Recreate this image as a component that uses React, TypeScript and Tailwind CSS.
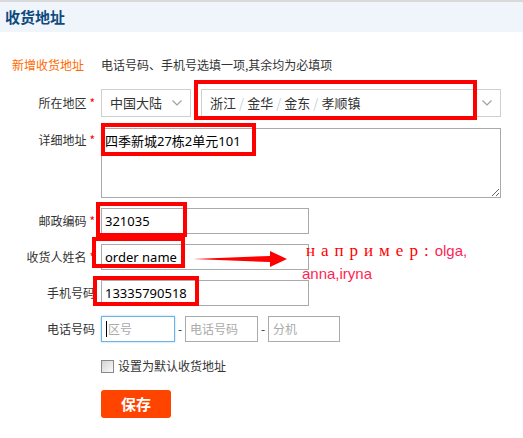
import React from "react";

const cjk = { fontFamily: '"Noto Sans CJK SC", "Noto Sans", sans-serif' };
const val = { fontFamily: '"Noto Sans", "Noto Sans CJK SC", sans-serif' };

const Chevron = () => (
  <svg width="10" height="6" viewBox="0 0 10 6" className="shrink-0">
    <polyline points="0.5,0.5 5,5 9.5,0.5" fill="none" stroke="#a0a0a0" strokeWidth="1.2" />
  </svg>
);

const Label = ({ text, required }: { text: string; required?: boolean }) => (
  <div className="w-[95px] flex justify-end items-center text-[12px] text-[#333] shrink-0">
    <span>{text}</span>
    {required && <span className="ml-[3px] text-[#f00] text-[12px] leading-none">*</span>}
  </div>
);

const RedBox = ({ className }: { className: string }) => (
  <div className={`absolute border-[4px] border-[#ff0000] pointer-events-none ${className}`} />
);

const Slash = () => <span className="mx-[3px] text-[#c9cfe0]">/</span>;

export default function App() {
  return (
    <div className="relative w-[523px] h-[438px] bg-white overflow-hidden" style={cjk}>
      {/* header */}
      <div className="border-t-2 border-[#d9d9d9] bg-[#f0f5fc] h-[32px] px-[5px] flex items-center">
        <h2 className="text-[15px] font-bold text-[#0d4a7e]">收货地址</h2>
      </div>

      <div className="pb-4">
        <div className="flex items-center h-[16px] mt-[25px] text-[12px]">
          <div className="w-[101px] pl-[12px] text-[#ff6a00] shrink-0">新增收货地址</div>
          <div className="text-[#333]">电话号码、手机号选填一项,其余均为必填项</div>
        </div>

        {/* region */}
        <div className="flex items-center h-[28px] mt-[16px]">
          <Label text="所在地区" required />
          <div className="ml-[6px] w-[90px] h-[28px] border border-[#cfcfcf] flex items-center justify-between pl-[8px] pr-[8px] text-[13px] text-[#333]">
            <span>中国大陆</span>
            <Chevron />
          </div>
          <div className="ml-[10px] w-[300px] h-[28px] border border-[#cfcfcf] flex items-center justify-between pl-[8px] pr-[8px] text-[13px] text-[#333]">
            <span>
              浙江<Slash />金华<Slash />金东<Slash />孝顺镇
            </span>
            <Chevron />
          </div>
        </div>

        {/* detail */}
        <div className="flex items-start mt-[11px]">
          <div className="pt-[4px] leading-[16px]">
            <Label text="详细地址" required />
          </div>
          <textarea
            readOnly
            defaultValue="四季新城27栋2单元101"
            className="ml-[6px] w-[400px] h-[70px] border border-[#aaa] px-[3px] py-[3px] text-[13px] leading-[18px] text-black outline-none"
            style={val}
          />
        </div>

        {/* zip */}
        <div className="flex items-center h-[26px] mt-[10px]">
          <Label text="邮政编码" required />
          <input
            readOnly
            value="321035"
            className="ml-[6px] w-[208px] h-[26px] border border-[#aaa] px-[3px] text-[13px] text-black outline-none"
            style={val}
          />
        </div>

        {/* name */}
        <div className="flex items-center h-[26px] mt-[10px]">
          <Label text="收货人姓名" required />
          <input
            readOnly
            value="order name"
            className="ml-[6px] w-[208px] h-[26px] border border-[#aaa] px-[3px] text-[13px] text-black outline-none"
            style={val}
          />
        </div>

        {/* mobile */}
        <div className="flex items-center h-[26px] mt-[10px]">
          <Label text="手机号码" />
          <input
            readOnly
            value="13335790518"
            className="ml-[6px] w-[208px] h-[26px] border border-[#aaa] px-[3px] text-[13px] text-black outline-none"
            style={val}
          />
        </div>

        {/* phone */}
        <div className="flex items-center h-[26px] mt-[10px] text-[12px]">
          <Label text="电话号码" />
          <div className="relative ml-[6px] w-[74px] h-[26px] border border-[#6cb3e6] shadow-[0_0_2px_#9fd0f2] flex items-center pl-[4px] text-[#aaa]">
            <span className="w-px h-[16px] bg-black mr-px" />
            区号
          </div>
          <span className="w-[10px] text-center text-[#333]">-</span>
          <div className="w-[73px] h-[26px] border border-[#aaa] flex items-center pl-[4px] text-[#aaa]">电话号码</div>
          <span className="w-[10px] text-center text-[#333]">-</span>
          <div className="w-[72px] h-[26px] border border-[#aaa] flex items-center pl-[4px] text-[#aaa]">分机</div>
        </div>

        {/* default */}
        <div className="flex items-center h-[14px] mt-[17px] ml-[101px] text-[12px] text-[#333]">
          <span className="w-[13px] h-[13px] border border-[#888] bg-gradient-to-br from-[#d4d4d4] to-[#fafafa] shrink-0" />
          <span className="ml-[4px]">设置为默认收货地址</span>
        </div>

        <button className="mt-[17px] ml-[101px] w-[70px] h-[28px] rounded-[3px] bg-[#ff4400] text-white text-[15px] font-bold">
          保存
        </button>
      </div>

      {/* annotations */}
      <RedBox className="left-[194px] top-[80px] w-[283px] h-[40px]" />
      <RedBox className="left-[101px] top-[123px] w-[155px] h-[33px]" />
      <RedBox className="left-[96px] top-[202px] w-[91px] h-[35px]" />
      <RedBox className="left-[92px] top-[237px] w-[93px] h-[31px]" />
      <RedBox className="left-[93px] top-[276px] w-[106px] h-[30px]" />

      <svg className="absolute left-[192px] top-[250px]" width="96" height="18" viewBox="0 0 96 18">
        <polygon points="1,9 78,6 78,1 95,9 78,17 78,12" fill="#ff0000" />
      </svg>

      <div className="absolute left-[302px] top-[239px] text-[15px] leading-[22px]">
        <span className="pl-[4px] text-[#ff0000] text-[17px] tracking-[6px]" style={{ fontFamily: '"Liberation Serif", serif' }}>
          например:
        </span>
        <span className="text-[#ff1f55]" style={{ fontFamily: '"Liberation Sans", sans-serif' }}>
          olga,
        </span>
        <br />
        <span className="text-[#ff1f55]" style={{ fontFamily: '"Liberation Sans", sans-serif' }}>
          anna,iryna
        </span>
      </div>
    </div>
  );
}
